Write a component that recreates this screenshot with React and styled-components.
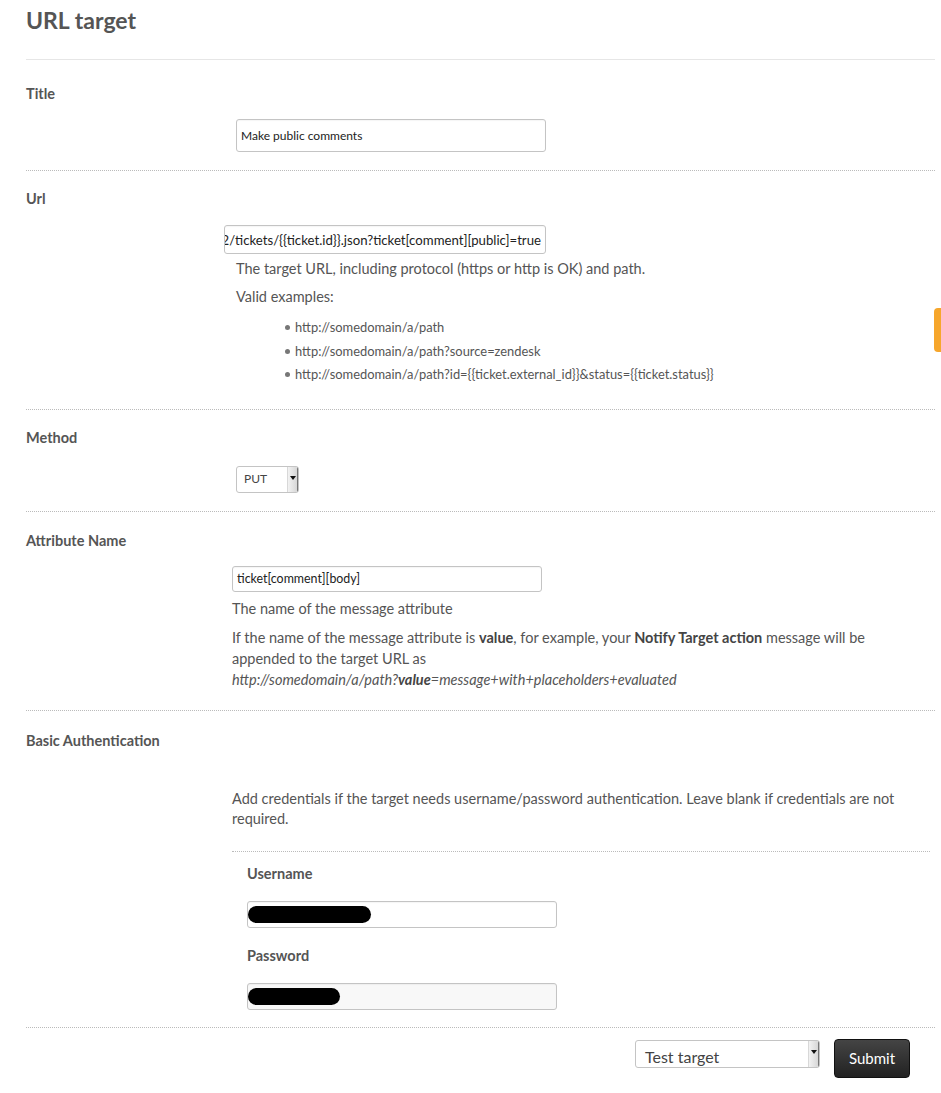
import styled, { createGlobalStyle } from 'styled-components'

const GlobalStyle = createGlobalStyle`
   html, body {
      margin: 0;
      padding: 0;
      background: #fff;
   }
   body {
      font-family: Lato, 'Open Sans', sans-serif;
      color: #555;
   }
`

const Page = styled.div`
   width: 941px;
   min-height: 1093px;
   box-sizing: border-box;
   padding: 0 6px 0 26px;
`

const Heading = styled.h1`
   margin: 0;
   padding: 8px 0 27px;
   font-size: 23px;
   line-height: 24px;
   font-weight: 700;
   color: #555;
   border-bottom: 1px solid #e6e6e6;
`

const Section = styled.div`
   padding: ${p => p.$top || 19}px 0 ${p => p.$bottom || 18}px;
   border-bottom: 1px dotted #bbb;
`

const Label = styled.div`
   font-size: 14.5px;
   line-height: 18px;
   font-weight: 700;
   color: #555;
`

const Body = styled.div`
   margin-left: ${p => p.$indent}px;
   margin-top: ${p => p.$top || 0}px;
`

const Field = styled.div`
   box-sizing: border-box;
   width: ${p => p.$w}px;
   height: ${p => p.$h}px;
   border: 1px solid #c4c4c4;
   border-radius: 3px;
   background: ${p => p.$muted ? '#f8f8f8' : '#fff'};
   display: flex;
   align-items: center;
   justify-content: ${p => p.$end ? 'flex-end' : 'flex-start'};
   overflow: hidden;
   white-space: nowrap;
   padding: 0 4px;
   font-size: ${p => p.$fs || 12}px;
   color: #222;
   box-shadow: inset 0 1px 1px rgba(0, 0, 0, 0.04);
`

const SecretField = styled(Field)`
   padding: 0;
   margin-top: ${p => p.$top}px;
`

const Redacted = styled.span`
   display: inline-block;
   width: ${p => p.$w}px;
   height: 17px;
   border-radius: 9px;
   background: #000;
`

const Help = styled.p`
   max-width: 680px;
   margin: ${p => p.$top || 0}px 0 0 ${p => p.$left || 0}px;
   font-size: 14.5px;
   line-height: ${p => p.$lh || 20}px;
   color: #555;

   b {
      font-weight: 700;
      color: #444;
   }
`

const Example = styled.i`
   display: block;
   font-style: italic;
`

const Examples = styled.ul`
   margin: 9px 0 0 12px;
   padding: 0 0 0 49px;
   list-style: none;
`

const ExampleItem = styled.li`
   font-size: 12.9px;
   line-height: 23.5px;
   color: #555;
   display: flex;
   align-items: center;
   gap: 5px;

   &::before {
      content: '';
      width: 5px;
      height: 5px;
      border-radius: 50%;
      background: #777;
   }
`

const SelectBox = styled.div`
   box-sizing: border-box;
   width: ${p => p.$w}px;
   height: ${p => p.$h}px;
   border: 1px solid #c4c4c4;
   border-radius: 3px;
   background: #fff;
   display: flex;
   align-items: center;
   font-size: ${p => p.$fs}px;
   color: #444;
   overflow: hidden;
`

const SelectText = styled.span`
   flex: 1;
   padding-left: ${p => p.$pad}px;
   padding-top: ${p => p.$drop || 0}px;
   line-height: 1;
`

const SelectArrow = styled.span`
   width: 10px;
   align-self: stretch;
   background: linear-gradient(to right, #f2f2f2, #d4d4d4);
   border-left: 1px solid #d8d8d8;
   box-shadow: inset -1px 0 0 #777;
   display: flex;
   align-items: center;
   justify-content: center;

   &::after {
      content: '';
      border-left: 3px solid transparent;
      border-right: 3px solid transparent;
      border-top: 4px solid #111;
      margin-top: ${p => p.$nudge || 0}px;
   }
`

const Inner = styled.div`
   margin: 22px 5px 0 206px;
   padding: 13px 0 0 15px;
   border-top: 1px dotted #bbb;
`

const SubLabel = styled(Label)`
   margin-top: ${p => p.$top || 0}px;
`

const Footer = styled.div`
   display: flex;
   justify-content: flex-end;
   align-items: flex-start;
   gap: 14px;
   padding: 11px 25px 0 0;
`

const SelectWrap = styled.div`
   margin-top: 1px;
`

const SubmitButton = styled.button`
   width: 76px;
   height: 39px;
   border: 1px solid #111;
   border-radius: 4px;
   background: linear-gradient(#444, #222);
   color: #fff;
   font-family: Lato, 'Open Sans', sans-serif;
   font-size: 15px;
   cursor: pointer;
`

const FeedbackTab = styled.div`
   position: fixed;
   right: 0;
   top: 308px;
   width: 7px;
   height: 44px;
   border-radius: 4px 0 0 4px;
   background: #f6a62b;
`

const examples = [
   'http://somedomain/a/path',
   'http://somedomain/a/path?source=zendesk',
   'http://somedomain/a/path?id={{ticket.external_id}}&status={{ticket.status}}',
]

const App = () => {
   return (
      <>
         <GlobalStyle />
         <Page>
            <Heading>URL target</Heading>

            <Section $top={25}>
               <Label>Title</Label>
               <Body $indent={210} $top={16}>
                  <Field $w={310} $h={33}>Make public comments</Field>
               </Body>
            </Section>

            <Section $bottom={22}>
               <Label>Url</Label>
               <Body $indent={198} $top={17}>
                  <Field $w={322} $h={29} $fs={13.2} $end>
                     https://example.zendesk.com/api/v2/tickets/{'{{ticket.id}}'}.json?ticket[comment][public]=true
                  </Field>
                  <Help $top={5} $left={12}>The target URL, including protocol (https or http is OK) and path.</Help>
                  <Help $top={8} $left={12}>Valid examples:</Help>
                  <Examples>
                     {examples.map(ex => (
                        <ExampleItem key={ex}>{ex}</ExampleItem>
                     ))}
                  </Examples>
               </Body>
            </Section>

            <Section>
               <Label>Method</Label>
               <Body $indent={210} $top={19}>
                  <SelectBox $w={63} $h={27} $fs={12}>
                     <SelectText $pad={7}>PUT</SelectText>
                     <SelectArrow $nudge={-2} />
                  </SelectBox>
               </Body>
            </Section>

            <Section $top={20} $bottom={20}>
               <Label>Attribute Name</Label>
               <Body $indent={206} $top={16}>
                  <Field $w={310} $h={26} $fs={12.4}>ticket[comment][body]</Field>
                  <Help $top={7}>The name of the message attribute</Help>
                  <Help $top={8} $lh={21}>
                     If the name of the message attribute is <b>value</b>, for example, your <b>Notify Target action</b> message will be appended to the target URL as
                     <Example>http://somedomain/a/path?<b>value</b>=message+with+placeholders+evaluated</Example>
                  </Help>
               </Body>
            </Section>

            <Section $top={21} $bottom={17}>
               <Label>Basic Authentication</Label>
               <Body $indent={206} $top={39}>
                  <Help>Add credentials if the target needs username/password authentication. Leave blank if credentials are not required.</Help>
               </Body>
               <Inner>
                  <SubLabel>Username</SubLabel>
                  <SecretField $w={310} $h={27} $top={18}>
                     <Redacted $w={123} />
                  </SecretField>
                  <SubLabel $top={19}>Password</SubLabel>
                  <SecretField $w={310} $h={27} $top={18} $muted>
                     <Redacted $w={92} />
                  </SecretField>
               </Inner>
            </Section>

            <Footer>
               <SelectWrap>
                  <SelectBox $w={185} $h={28} $fs={16}>
                     <SelectText $pad={9} $drop={6}>Test target</SelectText>
                     <SelectArrow $nudge={-4} />
                  </SelectBox>
               </SelectWrap>
               <SubmitButton>Submit</SubmitButton>
            </Footer>
         </Page>
         <FeedbackTab />
      </>
   )
}

export default App
